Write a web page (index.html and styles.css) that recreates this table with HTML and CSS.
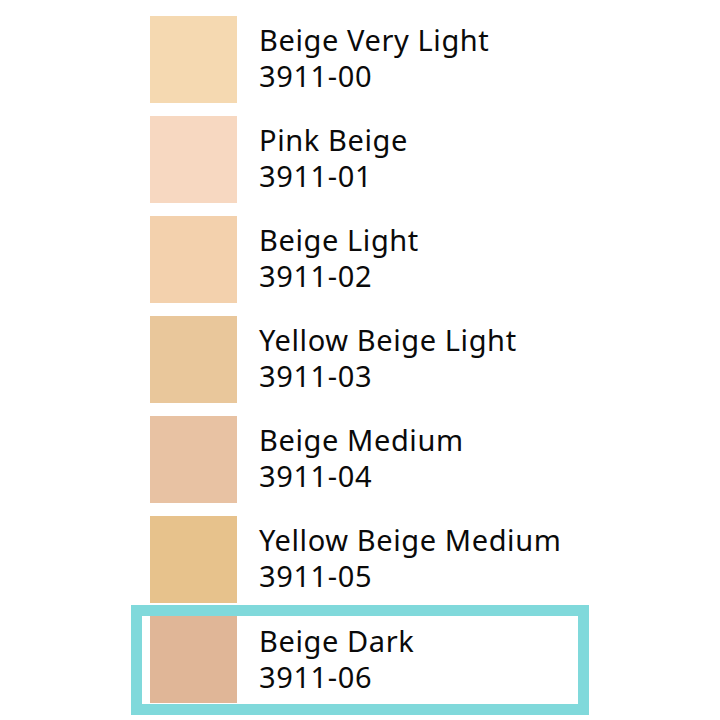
FILE: index.html
```html
<!DOCTYPE html>
<html>
<head>
<meta charset="utf-8">
<link rel="stylesheet" href="styles.css">
</head>
<body>
<div class="list">
  <div class="row"><div class="swatch c0"></div><div class="label"><div>Beige Very Light</div><div>3911-00</div></div></div>
  <div class="row"><div class="swatch c1"></div><div class="label"><div>Pink Beige</div><div>3911-01</div></div></div>
  <div class="row"><div class="swatch c2"></div><div class="label"><div>Beige Light</div><div>3911-02</div></div></div>
  <div class="row"><div class="swatch c3"></div><div class="label"><div>Yellow Beige Light</div><div>3911-03</div></div></div>
  <div class="row"><div class="swatch c4"></div><div class="label"><div>Beige Medium</div><div>3911-04</div></div></div>
  <div class="row"><div class="swatch c5"></div><div class="label"><div>Yellow Beige Medium</div><div>3911-05</div></div></div>
  <div class="row selected"><div class="swatch c6"></div><div class="label"><div>Beige Dark</div><div>3911-06</div></div></div>
</div>
</body>
</html>
```
FILE: styles.css
```css
html, body {
  margin: 0;
  padding: 0;
  background: #ffffff;
}
body {
  width: 720px;
  height: 720px;
  overflow: hidden;
  font-family: "Noto Sans", "Open Sans", sans-serif;
  color: #0a0a0a;
}
.list {
  display: flex;
  flex-direction: column;
  gap: 13px;
  padding: 16px 0 0 150px;
}
.row {
  display: flex;
  align-items: center;
  gap: 22px;
}
.swatch {
  width: 87px;
  height: 87px;
  flex: none;
}
.label {
  font-size: 29px;
  line-height: 36px;
  letter-spacing: 0.6px;
  padding-bottom: 4px;
}
.c0 { background: #f5d9b1; }
.c1 { background: #f7d8c1; }
.c2 { background: #f3d1ad; }
.c3 { background: #e9c79b; }
.c4 { background: #e8c2a3; }
.c5 { background: #e7c28c; }
.c6 { background: #e0b697; }
.selected {
  border: 11px solid #80d9db;
  margin: -11px 0 0 -19px;
  padding: 0 0 1px 8px;
  width: 428px;
}
.selected .label {
  padding-bottom: 2px;
}
```
